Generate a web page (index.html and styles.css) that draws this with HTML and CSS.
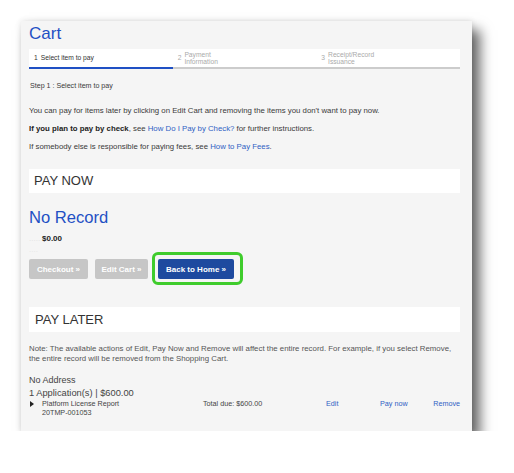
FILE: index.html
```html
<!DOCTYPE html>
<html lang="en">
<head>
<meta charset="utf-8">
<title>Cart</title>
<link rel="stylesheet" href="styles.css">
</head>
<body>
<div class="page">
  <div class="card">
    <h1 class="title">Cart</h1>
    <div class="tabs">
      <div class="tab active"><span class="num">1</span><span class="label">Select item to pay</span></div>
      <div class="tab"><span class="num">2</span><span class="label">Payment<br>Information</span></div>
      <div class="tab"><span class="num">3</span><span class="label">Receipt/Record<br>Issuance</span></div>
    </div>
    <div class="step">Step 1 : Select item to pay</div>
    <p class="para first">You can pay for items later by clicking on Edit Cart and removing the items you don't want to pay now.</p>
    <p class="para"><b>If you plan to pay by check</b>, see <a href="#">How Do I Pay by Check?</a> for further instructions.</p>
    <p class="para">If somebody else is responsible for paying fees, see <a href="#">How to Pay Fees</a>.</p>

    <div class="section-head now">PAY NOW</div>
    <h2 class="record">No Record</h2>
    <div class="amount"><span class="faint">.....</span><b>$0.00</b></div>
    <div class="faint-line">....</div>
    <div class="buttons">
      <button class="btn disabled w-checkout">Checkout »</button>
      <button class="btn disabled w-edit">Edit Cart »</button>
      <span class="highlight"><button class="btn primary">Back to Home »</button></span>
    </div>

    <div class="section-head later">PAY LATER</div>
    <div class="note">
      <span class="note-line">Note: The available actions of Edit, Pay Now and Remove will affect the entire record. For example, if you select Remove,</span>
      <span class="note-line">the entire record will be removed from the Shopping Cart.</span>
    </div>
    <div class="address">No Address</div>
    <div class="apps">1 Application(s) | $600.00</div>
    <div class="item">
      <span class="caret"></span>
      <div class="item-name">Platform License Report<br>20TMP-001053</div>
      <div class="item-total">Total due: $600.00</div>
      <a class="act" href="#">Edit</a>
      <a class="act" href="#">Pay now</a>
      <a class="act remove" href="#">Remove</a>
    </div>
  </div>
</div>
</body>
</html>
```

FILE: styles.css
```css
* { box-sizing: border-box; }
html, body {
  margin: 0;
  padding: 0;
  background: #ffffff;
  font-family: "Liberation Sans", Arial, sans-serif;
  color: #3a3a3a;
}
.page {
  padding: 21px 0 0 21px;
}
.card {
  width: 451px;
  height: 410px;
  background: #f5f5f5;
  padding: 3px 12px 0 8px;
  box-shadow: 8px 9px 12px rgba(0,0,0,0.6), 0 0 6px rgba(0,0,0,0.12);
}
.title {
  margin: 0;
  font-size: 17px;
  line-height: 20px;
  font-weight: normal;
  color: #1f50c4;
}
.tabs {
  margin-top: 5px;
  display: grid;
  grid-template-columns: 1fr 1fr 1fr;
  background: #ffffff;
}
.tab {
  height: 20px;
  border-bottom: 2px solid #cccccc;
  display: flex;
  align-items: center;
  gap: 3px;
  padding-left: 5px;
  font-size: 6.7px;
  line-height: 7.5px;
  color: #aaaaaa;
}
.tab.active {
  border-bottom: 2px solid #1f50c4;
  color: #333333;
}
.step {
  margin-top: 12px;
  font-size: 7.1px;
  line-height: 10px;
  padding-left: 1px;
}
.para {
  margin: 8px 0 0 0;
  font-size: 7.8px;
  line-height: 10px;
}
.para.first { margin-top: 15px; }
.para b { color: #222222; }
.para a, .act {
  color: #2f5fc4;
  text-decoration: none;
}
.section-head {
  margin-top: 17px;
  height: 24px;
  background: #ffffff;
  font-size: 13px;
  line-height: 24px;
  padding-left: 5px;
  color: #333333;
}
.section-head.later {
  margin-top: 28px;
  height: 25px;
  line-height: 25px;
  padding-left: 6px;
}
.record {
  margin: 15px 0 0 0;
  font-size: 16.6px;
  line-height: 20px;
  font-weight: normal;
  color: #1f50c4;
}
.amount {
  margin-top: 6px;
  font-size: 8px;
  line-height: 10px;
  color: #222222;
}
.faint {
  color: #e2e2e2;
  display: inline-block;
  width: 13px;
}
.faint-line {
  margin-top: 1px;
  font-size: 8px;
  line-height: 10px;
  color: #e6e6e6;
}
.buttons {
  margin-top: 4px;
  display: flex;
  align-items: center;
}
.btn {
  height: 20px;
  border: none;
  border-radius: 2px;
  font-family: "Liberation Sans", Arial, sans-serif;
  font-size: 8px;
  font-weight: bold;
  color: #ffffff;
  padding: 0;
  margin: 0;
}
.btn.disabled { background: #c6c6c6; }
.w-checkout { width: 59px; }
.w-edit { width: 53px; margin-left: 7px; }
.btn.primary {
  background: #1e4a9f;
  width: 76px;
}
.highlight {
  position: relative;
  display: inline-flex;
  margin-left: 10px;
}
.highlight::after {
  content: "";
  position: absolute;
  top: -7px;
  left: -6px;
  right: -9px;
  bottom: -6px;
  border: 3px solid #3fcc2c;
  border-radius: 6px;
}
.note {
  margin-top: 12px;
  font-size: 7.85px;
  line-height: 9.5px;
  color: #555555;
}
.note-line {
  display: block;
  white-space: nowrap;
}
.address {
  margin-top: 12px;
  font-size: 9px;
  line-height: 11px;
  color: #444444;
}
.apps {
  margin-top: 1px;
  font-size: 9.3px;
  line-height: 12px;
  color: #444444;
}
.item {
  display: grid;
  grid-template-columns: 13px 161px 123px 54px 53px 1fr;
  font-size: 7.2px;
  line-height: 9px;
  color: #444444;
}
.caret {
  margin-top: 2px;
  margin-left: 1px;
  width: 0;
  height: 0;
  border-top: 3px solid transparent;
  border-bottom: 3px solid transparent;
  border-left: 4px solid #222222;
}
.remove { text-align: right; }
```
